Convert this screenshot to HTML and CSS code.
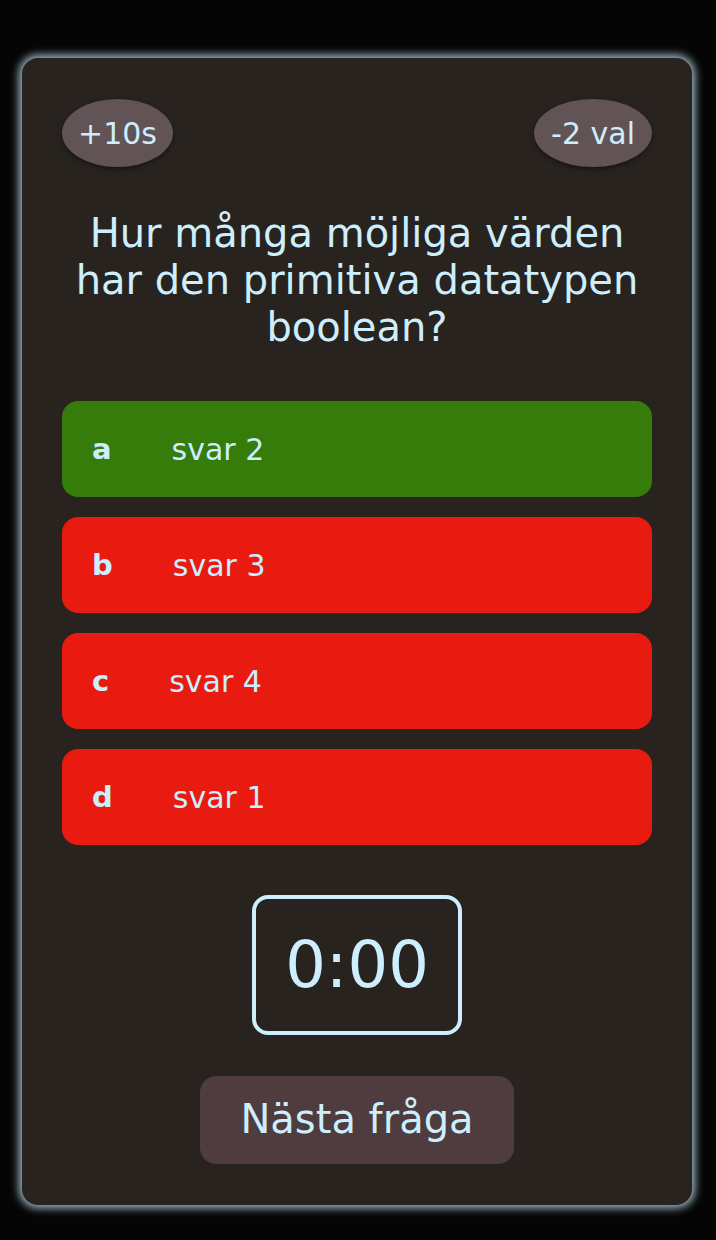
FILE: index.html
```html
<!DOCTYPE html>
<html lang="sv">
<head>
<meta charset="utf-8">
<title>Quiz</title>
<link rel="stylesheet" href="styles.css">
</head>
<body>
<main class="card">
  <div class="lifelines">
    <button class="pill">+10s</button>
    <button class="pill">-2 val</button>
  </div>
  <h1 class="question">Hur många möjliga värden har den primitiva datatypen boolean?</h1>
  <ul class="answers">
    <li class="answer correct"><span class="letter">a</span><span class="text">svar 2</span></li>
    <li class="answer wrong"><span class="letter">b</span><span class="text">svar 3</span></li>
    <li class="answer wrong"><span class="letter">c</span><span class="text">svar 4</span></li>
    <li class="answer wrong"><span class="letter">d</span><span class="text">svar 1</span></li>
  </ul>
  <div class="timer">0:00</div>
  <button class="next">Nästa fråga</button>
</main>
</body>
</html>
```
FILE: styles.css
```css
html, body {
  margin: 0;
  padding: 0;
  background: #050505;
}

body {
  font-family: "DejaVu Sans", Verdana, sans-serif;
  color: #cdeefd;
  padding: 58px 24px 0 22px;
  min-height: 1240px;
  box-sizing: border-box;
}

.card {
  width: 670px;
  height: 1147px;
  box-sizing: border-box;
  background: #28231f;
  border-radius: 16px;
  box-shadow: 0 0 9px 3px rgba(170, 198, 212, 0.95);
  padding: 41px 40px 40px;
  display: flex;
  flex-direction: column;
  align-items: center;
}

.lifelines {
  align-self: stretch;
  display: flex;
  justify-content: space-between;
}

.pill {
  font-family: inherit;
  font-size: 30px;
  color: #cdeefd;
  background: #625356;
  border: none;
  border-radius: 50%;
  height: 68px;
  padding: 0 16px;
  box-shadow: 0 2px 5px rgba(0, 0, 0, 0.45);
}

.pill + .pill {
  padding: 0 17px;
}

.question {
  font-size: 40px;
  font-weight: normal;
  line-height: 47px;
  text-align: center;
  margin: 43px 0 0;
  width: 100%;
}

.answers {
  list-style: none;
  margin: 50px 0 0;
  padding: 0;
  align-self: stretch;
  display: flex;
  flex-direction: column;
  gap: 20px;
}

.answer {
  height: 96px;
  border-radius: 16px;
  display: flex;
  align-items: center;
  padding-left: 30px;
  font-size: 30px;
}

.answer.correct {
  background: #357c0b;
}

.answer.wrong {
  background: #e91b10;
}

.letter {
  font-size: 29px;
  font-weight: bold;
  margin-right: 60px;
}

.timer {
  margin-top: 50px;
  border: 4px solid #cdeefd;
  border-radius: 16px;
  padding: 29px;
  font-size: 64px;
  line-height: 74px;
}

.next {
  margin-top: 41px;
  font-family: inherit;
  font-size: 40px;
  line-height: 47px;
  color: #cdeefd;
  background: #4e3c3e;
  border: none;
  border-radius: 16px;
  padding: 20px 40px 21px;
}
```
